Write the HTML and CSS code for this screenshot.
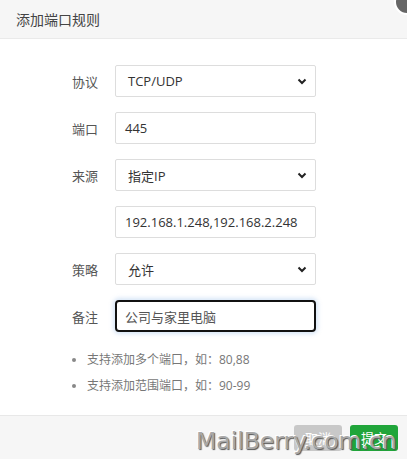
FILE: index.html
```html
<!DOCTYPE html>
<html>
<head>
  <meta charset="UTF-8">
  <title>添加端口规则</title>
  <link rel="stylesheet" href="styles.css">
</head>
<body>
  <div class="dialog">
    <div class="dialog-title">添加端口规则</div>
    <span class="close-btn"></span>

    <div class="dialog-body">
      <div class="form-row">
        <label>协议</label>
        <div class="field select">
          <span>TCP/UDP</span>
          <svg width="10" height="7" viewBox="0 0 10 7"><path d="M1.5 1.5l3.5 3.5 3.5-3.5" fill="none" stroke="#222" stroke-width="2"/></svg>
        </div>
      </div>
      <div class="form-row">
        <label>端口</label>
        <div class="field">445</div>
      </div>
      <div class="form-row">
        <label>来源</label>
        <div class="field select">
          <span>指定IP</span>
          <svg width="10" height="7" viewBox="0 0 10 7"><path d="M1.5 1.5l3.5 3.5 3.5-3.5" fill="none" stroke="#222" stroke-width="2"/></svg>
        </div>
      </div>
      <div class="form-row">
        <label></label>
        <div class="field">192.168.1.248,192.168.2.248</div>
      </div>
      <div class="form-row">
        <label>策略</label>
        <div class="field select">
          <span>允许</span>
          <svg width="10" height="7" viewBox="0 0 10 7"><path d="M1.5 1.5l3.5 3.5 3.5-3.5" fill="none" stroke="#222" stroke-width="2"/></svg>
        </div>
      </div>
      <div class="form-row">
        <label>备注</label>
        <div class="field focused">公司与家里电脑</div>
      </div>

      <ul class="tips">
        <li>支持添加多个端口，如：80,88</li>
        <li>支持添加范围端口，如：90-99</li>
      </ul>
    </div>

    <div class="dialog-footer">
      <button class="btn btn-cancel">取消</button>
      <button class="btn btn-submit">提交</button>
    </div>

    <div class="watermark">MailBerry.com.cn</div>
  </div>
</body>
</html>
```

FILE: styles.css
```css
body {
  margin: 0;
  font-family: "Open Sans", "Noto Sans CJK SC", sans-serif;
  background: #fff;
}
.dialog {
  width: 407px;
  height: 459px;
  position: relative;
  overflow: hidden;
  display: flex;
  flex-direction: column;
}
.dialog-title {
  height: 39px;
  line-height: 39px;
  padding-left: 16px;
  font-size: 14px;
  color: #444;
  background: #f6f6f6;
  border-bottom: 1px solid #eaeaea;
  box-sizing: border-box;
}
.close-btn {
  position: absolute;
  top: -11px;
  right: -13px;
  width: 22px;
  height: 22px;
  border-radius: 50%;
  background: #666;
  border: 2px solid #fff;
}
.dialog-body {
  flex: 1;
  padding-top: 26px;
}
.form-row {
  display: flex;
  align-items: center;
  height: 32px;
  margin-bottom: 15px;
}
.form-row label {
  width: 43px;
  padding-left: 72px;
  font-size: 13px;
  color: #555;
}
.field {
  width: 201px;
  height: 32px;
  box-sizing: border-box;
  border: 1px solid #ddd;
  border-radius: 2px;
  padding: 0 9px;
  font-size: 13px;
  color: #333;
  display: flex;
  align-items: center;
}
.select {
  justify-content: space-between;
  padding-left: 12px;
  padding-right: 8px;
}
.focused {
  border: 2px solid #111;
  border-radius: 4px;
  padding-left: 8px;
  color: #555;
  box-shadow: 0 0 4px 2px rgba(140, 180, 230, 0.35);
}
.tips {
  margin: 6px 0 0;
  padding-left: 87px;
  font-size: 12px;
  color: #777;
}
.tips li {
  line-height: 26px;
}
.tips li::marker {
  color: #888;
}
.dialog-footer {
  height: 44px;
  background: #f6f6f6;
  border-top: 1px solid #e8e8e8;
  box-sizing: border-box;
  display: flex;
  justify-content: flex-end;
  align-items: center;
  gap: 8px;
  padding-right: 9px;
}
.btn {
  width: 48px;
  height: 26px;
  border: none;
  border-radius: 3px;
  font-family: "Noto Sans CJK SC", sans-serif;
  font-size: 13px;
  color: #fff;
  padding: 0;
}
.btn-cancel {
  background: #c8c8c8;
}
.btn-submit {
  background: #20a53a;
}
.watermark {
  position: absolute;
  left: 196px;
  top: 428px;
  font-family: "DejaVu Sans", sans-serif;
  font-size: 23.5px;
  line-height: 1.16;
  color: #a8a8a8;
  text-shadow: 1px 1px 1px #555, -1px -1px 0 #fff;
  pointer-events: none;
  white-space: nowrap;
}
```
